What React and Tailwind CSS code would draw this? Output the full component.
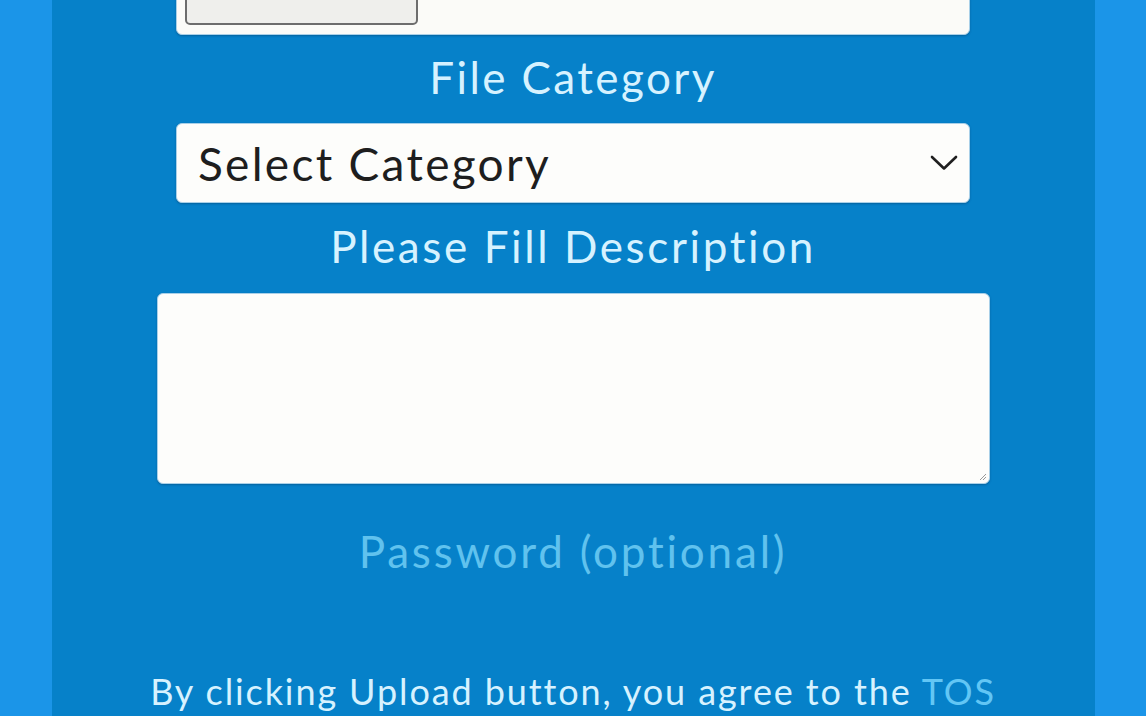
const font = { fontFamily: "Lato, 'Open Sans', sans-serif" };

export default function App() {
  return (
    <div className="w-full h-[716px] overflow-hidden bg-[#1b95e8] flex justify-center" style={font}>
      <div className="w-[1043px] h-full bg-[#0681c9] flex flex-col items-center">
        {/* file picker, scrolled half out of view */}
        <div className="w-[794px] h-[80px] -mt-[45px] shrink-0 rounded-md bg-[#fbfbf8] border border-[#a9d0e8] shadow-[0_1px_2px_rgba(0,40,80,0.35)] flex items-end pl-[8px] pb-[9px]">
          <div className="w-[233px] h-[60px] rounded-[5px] bg-[#efefec] border-2 border-[#6d6d6d]" />
        </div>

        <label className="mt-[12px] text-[44px] leading-[60px] text-[#d6f2ff] tracking-[2.4px]">
          File Category
        </label>

        <div className="mt-[16px] w-[794px] h-[80px] shrink-0 rounded-md bg-[#fdfdfb] border border-[#a9d0e8] shadow-[0_1px_2px_rgba(0,40,80,0.35)] flex items-center justify-between pl-[21px] pr-[11px]">
          <span className="text-[46px] text-[#1e1e1e] tracking-[2.3px]">Select Category</span>
          <svg width="28" height="16" viewBox="0 0 28 16" fill="none">
            <path d="M2 2 L14 13.5 L26 2" stroke="#1f1f1f" strokeWidth="2.6" strokeLinecap="round" strokeLinejoin="round" />
          </svg>
        </div>

        <label className="mt-[13px] text-[44px] leading-[60px] text-[#d6f2ff] tracking-[2.6px]">
          Please Fill Description
        </label>

        <div className="mt-[17px] w-[833px] h-[191px] shrink-0 rounded-md bg-[#fdfdfb] border border-[#a9d0e8] shadow-[0_1px_2px_rgba(0,40,80,0.35)] relative">
          <svg className="absolute right-[2px] bottom-[2px]" width="8" height="8" viewBox="0 0 8 8">
            <path d="M7 1 L1 7 M7 4 L4 7" stroke="#999" strokeWidth="1" />
          </svg>
        </div>

        <input
          type="password"
          placeholder="Password (optional)"
          className="mt-[29px] w-[833px] h-[76px] bg-transparent text-center text-[44px] text-white placeholder:text-[#60c2ee] outline-none tracking-[2.8px]"
        />

        <p className="mt-[80px] text-[36px] leading-[44px] text-[#d6f2ff] tracking-[1.9px] whitespace-nowrap">
          By clicking Upload button, you agree to the <span className="text-[#62c6f5]">TOS</span>
        </p>
      </div>
    </div>
  );
}
